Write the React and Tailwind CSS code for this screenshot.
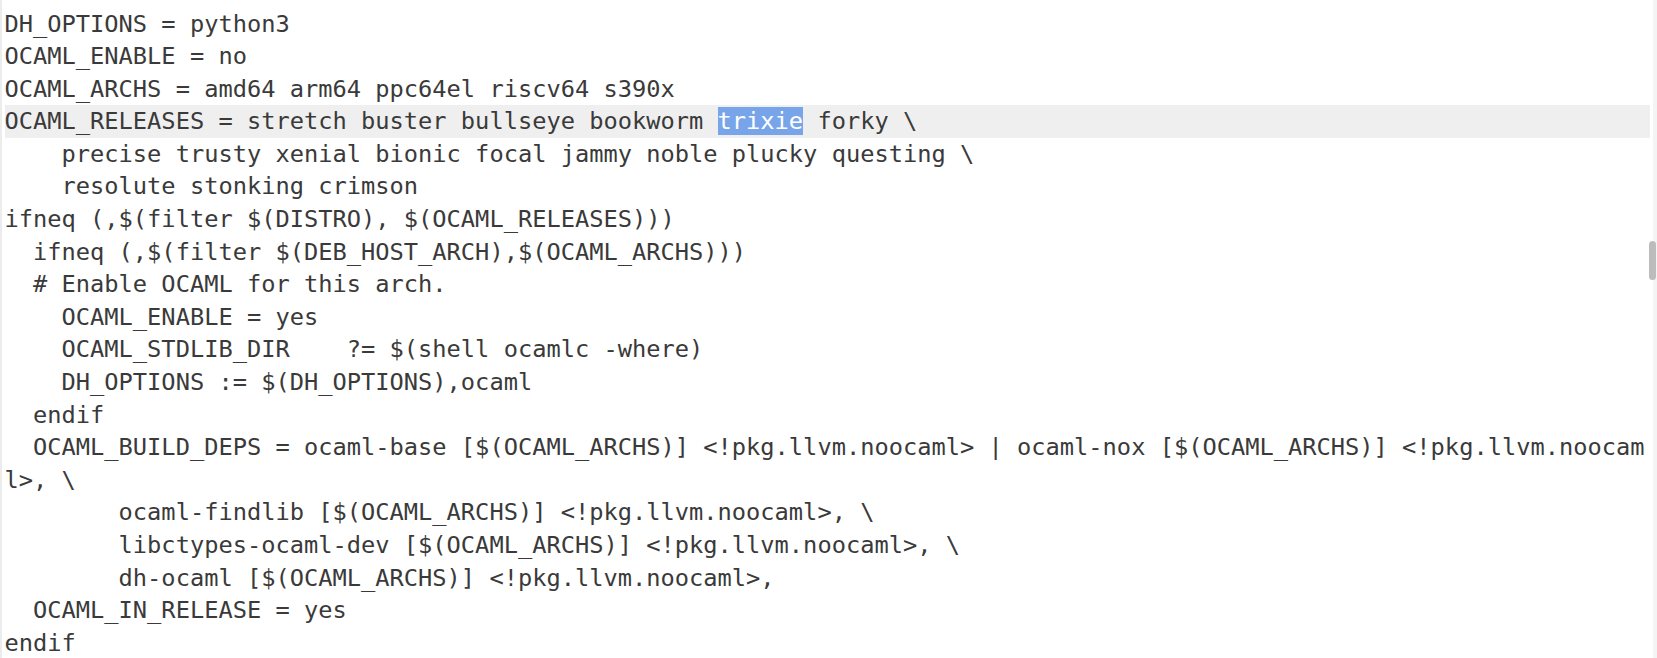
// Editor view of a debian/rules snippet with the current line highlighted
const LINES = [
  'DH_OPTIONS = python3',
  'OCAML_ENABLE = no',
  'OCAML_ARCHS = amd64 arm64 ppc64el riscv64 s390x',
  null, // current line, rendered with the selection
  '    precise trusty xenial bionic focal jammy noble plucky questing \\',
  '    resolute stonking crimson',
  'ifneq (,$(filter $(DISTRO), $(OCAML_RELEASES)))',
  '  ifneq (,$(filter $(DEB_HOST_ARCH),$(OCAML_ARCHS)))',
  '  # Enable OCAML for this arch.',
  '    OCAML_ENABLE = yes',
  '    OCAML_STDLIB_DIR    ?= $(shell ocamlc -where)',
  '    DH_OPTIONS := $(DH_OPTIONS),ocaml',
  '  endif',
  '  OCAML_BUILD_DEPS = ocaml-base [$(OCAML_ARCHS)] <!pkg.llvm.noocaml> | ocaml-nox [$(OCAML_ARCHS)] <!pkg.llvm.noocam',
  'l>, \\',
  '        ocaml-findlib [$(OCAML_ARCHS)] <!pkg.llvm.noocaml>, \\',
  '        libctypes-ocaml-dev [$(OCAML_ARCHS)] <!pkg.llvm.noocaml>, \\',
  '        dh-ocaml [$(OCAML_ARCHS)] <!pkg.llvm.noocaml>,',
  '  OCAML_IN_RELEASE = yes',
  'endif',
];

export default function App() {
  return (
    <div className="relative flex h-[658px] w-[1657px] overflow-hidden bg-white">
      <div className="w-[2px] bg-[#ececec]" />
      <div className="flex-1 pt-[7.5px] pl-[2.5px] pr-[3.5px] font-['DejaVu_Sans_Mono',monospace] text-[23.7px] leading-[32.6px] text-[#3a3a3a]">
        {LINES.map((line, i) =>
          line === null ? (
            <div key={i} className="whitespace-pre bg-[#efefef]">
              {'OCAML_RELEASES = stretch buster bullseye bookworm '}
              <span className="bg-[#78a5ea] text-white">trixie</span>
              {' forky \\'}
            </div>
          ) : (
            <div key={i} className="whitespace-pre">
              {line}
            </div>
          )
        )}
      </div>
      <div className="w-[4px] bg-[#f4f4f4]" />
      {/* scrollbar thumb */}
      <div className="absolute right-[1px] top-[241px] h-[39px] w-[7px] rounded-full bg-[#bcbcbc]" />
    </div>
  );
}
